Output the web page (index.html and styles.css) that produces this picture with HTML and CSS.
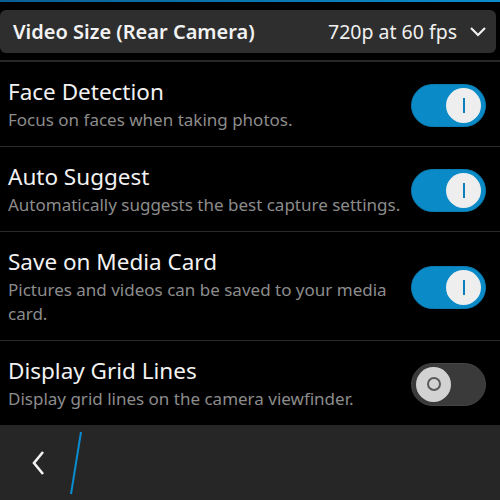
FILE: index.html
```html
<!DOCTYPE html>
<html lang="en">
<head>
    <meta charset="UTF-8">
    <title>Camera Settings</title>
    <link rel="stylesheet" href="styles.css">
</head>
<body>
    <div class="screen">
        <div class="topline"></div>

        <div class="dropdown">
            <span class="dropdown-label">Video Size (Rear Camera)</span>
            <span class="dropdown-value">
                720p at 60 fps
                <svg class="chevron" width="18" height="12" viewBox="0 0 18 12">
                    <polyline points="2,2 9,9 16,2" fill="none" stroke="#f0f0f0" stroke-width="2.2"/>
                </svg>
            </span>
        </div>

        <div class="list">
            <div class="row">
                <div class="row-text">
                    <div class="title">Face Detection</div>
                    <div class="sub">Focus on faces when taking photos.</div>
                </div>
                <div class="toggle on"><span class="knob"></span></div>
            </div>

            <div class="row">
                <div class="row-text">
                    <div class="title">Auto Suggest</div>
                    <div class="sub">Automatically suggests the best capture settings.</div>
                </div>
                <div class="toggle on"><span class="knob"></span></div>
            </div>

            <div class="row">
                <div class="row-text">
                    <div class="title">Save on Media Card</div>
                    <div class="sub narrow">Pictures and videos can be saved to your media card.</div>
                </div>
                <div class="toggle on"><span class="knob"></span></div>
            </div>

            <div class="row last">
                <div class="row-text">
                    <div class="title">Display Grid Lines</div>
                    <div class="sub">Display grid lines on the camera viewfinder.</div>
                </div>
                <div class="toggle off"><span class="knob"></span></div>
            </div>
        </div>

        <div class="footer">
            <svg class="back" width="20" height="30" viewBox="0 0 20 30">
                <polyline points="13,4 4,15 13,26" fill="none" stroke="#f2f2f2" stroke-width="2.6"/>
            </svg>
            <svg class="slash" width="20" height="70" viewBox="0 0 20 70">
                <line x1="15" y1="4" x2="5" y2="66" stroke="#0a8cd0" stroke-width="2"/>
            </svg>
        </div>
    </div>
</body>
</html>
```

FILE: styles.css
```css
body {
    margin: 0;
    padding: 0;
    background-color: #000;
    font-family: "Noto Sans", "Open Sans", sans-serif;
    color: #f0f0f0;
}

.screen {
    width: 500px;
    height: 500px;
    display: flex;
    flex-direction: column;
    overflow: hidden;
}

.topline {
    flex-shrink: 0;
    height: 2px;
    background: linear-gradient(to right, #0a5f93, #0a8ccc);
}

.dropdown {
    flex-shrink: 0;
    margin: 8px 4px 0 0;
    height: 43px;
    background-color: #2e2e2e;
    border-radius: 6px;
    display: flex;
    align-items: center;
    justify-content: space-between;
    padding: 0 9px 0 13px;
}

.dropdown-label {
    font-size: 20px;
    font-weight: 600;
    color: #f2f2f2;
}

.dropdown-value {
    font-size: 19.5px;
    color: #f0f0f0;
    display: flex;
    align-items: center;
    gap: 12px;
}

.list {
    flex-shrink: 0;
    margin-top: 7px;
    border-top: 2px solid #262626;
}

.row {
    display: flex;
    align-items: center;
    justify-content: space-between;
    gap: 4px;
    padding: 16px 14px 14px 8px;
    border-bottom: 1px solid #2a2a2a;
}

.row.last {
    border-bottom: none;
}

.title {
    font-size: 22.5px;
    line-height: 28px;
    color: #f2f2f2;
    margin-bottom: 2px;
}

.sub {
    font-size: 17px;
    line-height: 24px;
    color: #8c8c8c;
    white-space: nowrap;
}

.sub.narrow {
    white-space: normal;
    max-width: 380px;
}

.toggle {
    flex-shrink: 0;
    width: 75px;
    height: 43px;
    border-radius: 22px;
    box-sizing: border-box;
    display: flex;
    align-items: center;
    padding: 0 4px;
}

.toggle.on {
    background-color: #0a8ac6;
    border: 1px solid #0b7db4;
    justify-content: flex-end;
}

.toggle.off {
    background-color: #3a3a3a;
    border: 1px solid #444;
    justify-content: flex-start;
}

.knob {
    width: 35px;
    height: 35px;
    border-radius: 50%;
    display: flex;
    align-items: center;
    justify-content: center;
}

.toggle.on .knob {
    background-color: #eeeeee;
}

.toggle.on .knob::after {
    content: "";
    width: 2px;
    height: 15px;
    background-color: #0a7fbb;
}

.toggle.off .knob {
    background-color: #d2d2d2;
}

.toggle.off .knob::after {
    content: "";
    width: 10px;
    height: 10px;
    border: 2px solid #5a5a5a;
    border-radius: 50%;
}

.footer {
    flex-shrink: 0;
    margin-top: auto;
    height: 75px;
    background-color: #262626;
    display: flex;
    align-items: center;
}

.back {
    margin-left: 30px;
}

.slash {
    margin-left: 16px;
}
```
